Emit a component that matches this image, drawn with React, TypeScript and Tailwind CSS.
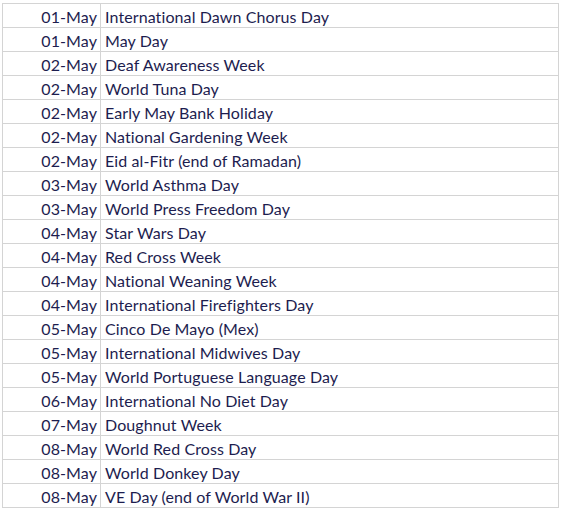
const events: [string, string][] = [
  ['01-May', 'International Dawn Chorus Day'],
  ['01-May', 'May Day'],
  ['02-May', 'Deaf Awareness Week'],
  ['02-May', 'World Tuna Day'],
  ['02-May', 'Early May Bank Holiday'],
  ['02-May', 'National Gardening Week'],
  ['02-May', 'Eid al-Fitr (end of Ramadan)'],
  ['03-May', 'World Asthma Day'],
  ['03-May', 'World Press Freedom Day'],
  ['04-May', 'Star Wars Day'],
  ['04-May', 'Red Cross Week'],
  ['04-May', 'National Weaning Week'],
  ['04-May', 'International Firefighters Day'],
  ['05-May', 'Cinco De Mayo (Mex)'],
  ['05-May', 'International Midwives Day'],
  ['05-May', 'World Portuguese Language Day'],
  ['06-May', 'International No Diet Day'],
  ['07-May', 'Doughnut Week'],
  ['08-May', 'World Red Cross Day'],
  ['08-May', 'World Donkey Day'],
  ['08-May', 'VE Day (end of World War II)'],
];

export default function App() {
  return (
    <div className="h-[509px] w-[561px] overflow-hidden bg-white pt-[3px] pl-[2px] font-['Lato',sans-serif] text-[16px] tracking-[0.1px] text-[#1d1d4f]">
      <div className="w-[557px] border-t border-l border-[#d4d4d4]">
        {events.map(([date, name], i) => (
          <div key={i} className="flex h-6 border-b border-[#d4d4d4]">
            <div className="flex w-[98px] items-end justify-end border-r border-[#d4d4d4] pr-[3px] pb-[2px] leading-none">
              {date}
            </div>
            <div className="flex w-[458px] items-end border-r border-[#d4d4d4] pl-[4px] pb-[2px] leading-none">
              {name}
            </div>
          </div>
        ))}
      </div>
    </div>
  );
}
